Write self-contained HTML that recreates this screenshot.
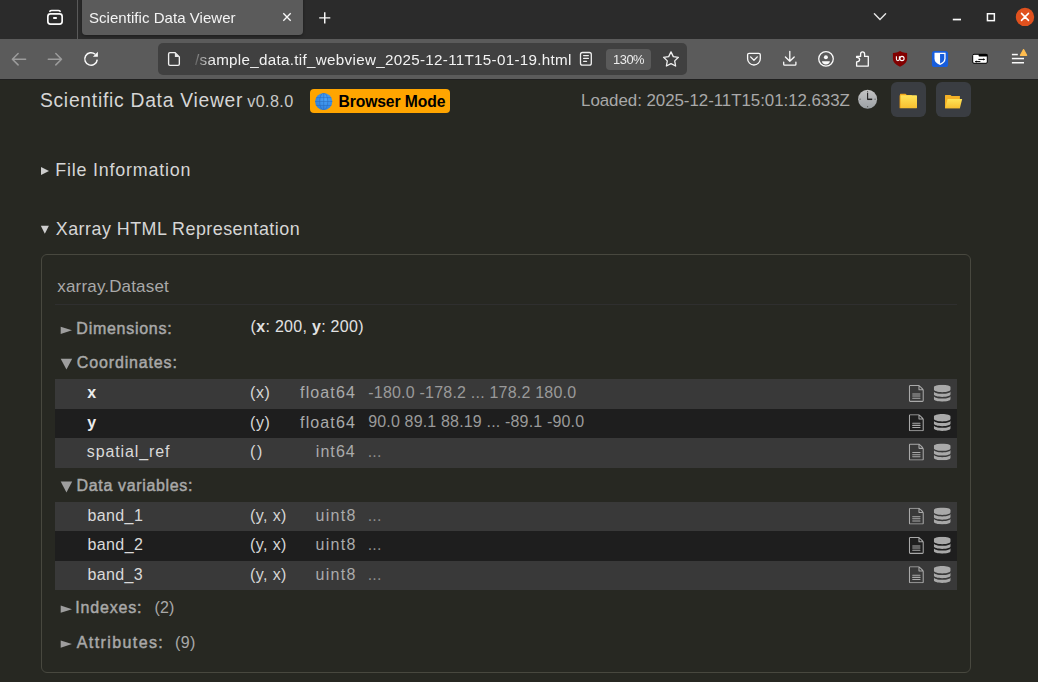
<!DOCTYPE html>
<html><head><meta charset="utf-8">
<style>
*{box-sizing:border-box;margin:0;padding:0}
html,body{width:1038px;height:682px;overflow:hidden;background:#272822;font-family:"Liberation Sans",sans-serif}
.a{position:absolute;white-space:nowrap;line-height:1}
#tabbar{position:absolute;left:0;top:0;width:1038px;height:39px;background:#2b2b2b}
#sep{position:absolute;left:77px;top:0;width:1px;height:39px;background:#5a5a5a}
#tab{position:absolute;left:82px;top:-6px;width:221px;height:41px;background:#5b5b5b;border-radius:4px;box-shadow:0 1px 3px rgba(0,0,0,0.35)}
#nav{position:absolute;left:0;top:39px;width:1038px;height:40px;background:#5b5b5b}
#urlbox{position:absolute;left:158px;top:43px;width:529px;height:32px;background:#404040;border-radius:5px}
#zoom{position:absolute;left:606px;top:49px;width:45px;height:21px;background:#5a5a5a;border-radius:4px}
.btn{position:absolute;top:82px;width:35px;height:35px;background:#3a3d42;border-radius:6px}
#badge{position:absolute;left:310px;top:89px;width:140px;height:24px;background:#ffa500;border-radius:4px}
#box{position:absolute;left:41px;top:254px;width:930px;height:419px;border:1px solid #48483f;border-radius:6px}
#hr{position:absolute;left:55px;top:304px;width:902px;height:1px;background:#2f2f2f}
.row{position:absolute;left:55px;width:902px}
.r1{background:#393939}
.r2{background:#1e1e1e}
#ico{position:absolute;left:0;top:0}
#fade{position:absolute;left:188px;top:50px;width:26px;height:20px;background:linear-gradient(to right,#404040 15%,rgba(64,64,64,0.55) 45%,rgba(64,64,64,0))}
</style></head><body>
<div id="tabbar"></div>
<div id="sep"></div>
<div id="tab"></div>
<div id="nav"></div>
<div id="urlbox"></div>
<div style="position:absolute;left:0;top:79px;width:1038px;height:1px;background:#202020"></div>
<div id="zoom"></div>
<div class="btn" style="left:891px"></div>
<div class="btn" style="left:936px"></div>
<div id="badge"></div>
<div id="box"></div>
<div id="hr"></div>
<div class="row r1" style="top:379px;height:30px"></div>
<div class="row r2" style="top:409px;height:29px"></div>
<div class="row r1" style="top:438px;height:30px"></div>
<div class="row r1" style="top:502px;height:29px"></div>
<div class="row r2" style="top:531px;height:30px"></div>
<div class="row r1" style="top:561px;height:29px"></div>
<svg id="ico" width="1038" height="682" viewBox="0 0 1038 682">
<defs>
<symbol id="dbi" viewBox="0 0 32 32"><path d="M16 0c-8.837 0-16 2.239-16 5v4c0 2.761 7.163 5 16 5s16-2.239 16-5v-4c0-2.761-7.163-5-16-5z"/><path d="M16 17c-8.837 0-16-2.239-16-5v6c0 2.761 7.163 5 16 5s16-2.239 16-5v-6c0 2.761-7.163 5-16 5z"/><path d="M16 26c-8.837 0-16-2.239-16-5v6c0 2.761 7.163 5 16 5s16-2.239 16-5v-6c0 2.761-7.163 5-16 5z"/></symbol>
<symbol id="fti" viewBox="0 0 32 32"><path d="M28.681 7.159c-0.694-0.947-1.662-2.053-2.724-3.116s-2.169-2.030-3.116-2.724c-1.612-1.182-2.393-1.319-2.841-1.319h-15.5c-1.378 0-2.5 1.121-2.5 2.5v27c0 1.378 1.122 2.5 2.5 2.5h23c1.378 0 2.5-1.122 2.5-2.5v-19.5c0-0.448-0.137-1.23-1.319-2.841zM24.543 5.457c0.959 0.959 1.712 1.825 2.268 2.543h-4.811v-4.811c0.718 0.556 1.584 1.309 2.543 2.268zM28 29.5c0 0.271-0.229 0.5-0.5 0.5h-23c-0.271 0-0.5-0.229-0.5-0.5v-27c0-0.271 0.229-0.5 0.5-0.5 0 0 15.499-0 15.5 0v7c0 0.552 0.448 1 1 1h7v19.5z"/><path d="M23 26h-14c-0.552 0-1-0.448-1-1s0.448-1 1-1h14c0.552 0 1 0.448 1 1s-0.448 1-1 1z"/><path d="M23 22h-14c-0.552 0-1-0.448-1-1s0.448-1 1-1h14c0.552 0 1 0.448 1 1s-0.448 1-1 1z"/><path d="M23 18h-14c-0.552 0-1-0.448-1-1s0.448-1 1-1h14c0.552 0 1 0.448 1 1s-0.448 1-1 1z"/></symbol>
<linearGradient id="clk" x1="0" y1="0" x2="0" y2="1"><stop offset="0" stop-color="#c4c4c4"/><stop offset="1" stop-color="#9ca1a5"/></linearGradient>
<linearGradient id="fld" x1="0" y1="0" x2="0" y2="1"><stop offset="0" stop-color="#ffe458"/><stop offset="1" stop-color="#f7bf30"/></linearGradient>
</defs>
<!-- tab bar -->
<g fill="none" stroke="#fafafa" stroke-width="1.6" stroke-linecap="round">
<rect x="47.85" y="13.8" width="14.3" height="10.4" rx="2.6" stroke-width="1.7"/>
<path d="M49.8 11.4 Q50.2 10.4 51.8 10.4 H58.2 Q59.8 10.4 60.2 11.4" stroke-width="1.5"/>
<path d="M53.2 18 H56.8" stroke-width="2" stroke-linecap="butt"/>
<path d="M283.3 13.3 L290.7 20.7 M290.7 13.3 L283.3 20.7" stroke-width="1.35" stroke-linecap="butt"/>
<path d="M319.2 17.85 H330.3 M324.75 12.3 V23.4" stroke-width="1.45" stroke-linecap="butt"/>
<path d="M874.4 13.7 L880 19.4 L885.6 13.7" stroke="#e6e6e6" stroke-width="1.4"/>
<rect x="987.45" y="13.75" width="6.9" height="6.9" stroke-width="1.5"/>
</g>
<rect x="952.8" y="18.7" width="8.2" height="1.7" fill="#fafafa"/>
<circle cx="1025" cy="16.9" r="9.2" fill="#e0511e"/>
<path d="M1021.5 13.4 L1028.5 20.4 M1028.5 13.4 L1021.5 20.4" stroke="#fff" stroke-width="1.5" stroke-linecap="round"/>
<!-- nav bar -->
<g fill="none" stroke="#9c9c9c" stroke-width="1.5" stroke-linecap="round" stroke-linejoin="round">
<path d="M25.6 59.2 H12.4 M18.1 53.5 L12.4 59.2 L18.1 64.9"/>
<path d="M48.3 59.2 H61.5 M55.8 53.5 L61.5 59.2 L55.8 64.9"/>
</g>
<path d="M97.25 59.6 A6.25 6.25 0 1 1 95.2 54.3" fill="none" stroke="#fafafa" stroke-width="1.5"/>
<path d="M97.9 51.8 V56.8 H92.9 Z" fill="#fafafa"/>
<path d="M170 52.55 H174.9 L179.35 57 V63.9 Q179.35 65.3 177.95 65.3 H170 Q168.6 65.3 168.6 63.9 V53.95 Q168.6 52.55 170 52.55 Z" fill="none" stroke="#f0f0f0" stroke-width="1.35" stroke-linejoin="round"/>
<path d="M174.9 52.6 L179.3 57.1 H174.9 Z" fill="#e8e8e8"/>
<g fill="none" stroke="#f0f0f0" stroke-width="1.3" stroke-linecap="round" stroke-linejoin="round">
<rect x="580.5" y="52.5" width="10.8" height="12.7" rx="2"/>
<path d="M583.6 55.6 H588.4 M583.6 58.4 H588.4 M583.6 61.3 H586.6" stroke-width="1.2"/>
<path d="M671 51.9 L673.3 56.6 L678.4 57.3 L674.7 60.9 L675.6 66 L671 63.6 L666.4 66 L667.3 60.9 L663.6 57.3 L668.7 56.6 Z"/>
</g>
<g fill="none" stroke="#fafafa" stroke-width="1.3" stroke-linecap="round" stroke-linejoin="round">
<path d="M749.1 53.3 H758.8 Q760.3 53.3 760.3 54.8 V58.65 A6.35 6.35 0 0 1 747.6 58.65 V54.8 Q747.6 53.3 749.1 53.3 Z"/>
<path d="M750.6 56.9 L753.95 60.2 L757.3 56.9"/>
<path d="M789.8 51.3 V61.3 M785.4 57 L789.8 61.3 L794.2 57"/>
<path d="M783.7 62.2 V64.3 Q783.7 65.2 784.6 65.2 H795 Q795.9 65.2 795.9 64.3 V62.2"/>
<circle cx="826" cy="58.85" r="7.3"/>
<path d="M856.6 66.1 V61.8 Q859.6 61.8 859.6 59.6 Q859.6 57.4 856.6 57.4 V56.4 H860.6 V54.1 Q860.6 51.9 862.6 51.9 Q864.6 51.9 864.6 54.1 V56.4 H868.3 V66.1 Z"/>
</g>
<circle cx="825.9" cy="57.3" r="2" fill="#fafafa"/>
<path d="M821.9 61.3 H829.9 Q829.6 64.4 825.9 64.4 Q822.2 64.4 821.9 61.3 Z" fill="#fafafa"/>
<path d="M900 50.9 L902.5 52.3 Q904.8 53 907.1 53 V59 Q907.1 63.6 900 66.7 Q892.9 63.6 892.9 59 V53 Q895.2 53 897.5 52.3 Z" fill="#820000"/>
<path d="M896.4 56.3 V59.1 Q896.4 60.7 897.9 60.7 Q899.4 60.7 899.4 59.1 V56.3" fill="none" stroke="#fff" stroke-width="1.1"/>
<circle cx="902" cy="58.5" r="2.1" fill="none" stroke="#fff" stroke-width="1.1"/>
<rect x="931.9" y="50.9" width="16.2" height="16.1" rx="2.6" fill="#175ddc"/>
<path d="M934.5 52.8 H945.6 V58.5 Q945.6 62.8 940.05 65.1 Q934.5 62.8 934.5 58.5 Z" fill="#fff"/>
<path d="M940.05 54.1 H944.3 V58.5 Q944.3 61.8 940.05 63.6 Z" fill="#175ddc"/>
<rect x="972.7" y="54.3" width="14.6" height="9" rx="1.3" fill="#fff" stroke="#000" stroke-width="1"/>
<rect x="978.6" y="54" width="9" height="2.6" rx="0.8" fill="#000"/>
<path d="M978.4 59.4 H984.7 M975.2 61.6 H980.4" stroke="#000" stroke-width="1"/>
<path d="M983.2 58.3 L984.9 59.4 L983.2 60.5 Z M976.7 60.5 L975 61.6 L976.7 62.7 Z" fill="#000"/>
<rect x="1011.9" y="53.8" width="5.9" height="1.5" fill="#fafafa"/>
<rect x="1011.9" y="57.8" width="12.1" height="1.5" fill="#fafafa"/>
<rect x="1011.9" y="62" width="12.1" height="1.5" fill="#fafafa"/>
<path d="M1023.55 49.6 L1026.7 55.3 H1020.4 Z" fill="#ffbd4f" stroke="#ffbd4f" stroke-width="1.2" stroke-linejoin="round"/>
<!-- page header -->
<clipPath id="gclip"><circle cx="323.7" cy="101.5" r="8.6"/></clipPath>
<radialGradient id="glg" cx="0.6" cy="0.35" r="0.7"><stop offset="0" stop-color="#4aa3f5"/><stop offset="1" stop-color="#2f7fdc"/></radialGradient>
<circle cx="323.7" cy="101.5" r="8.6" fill="url(#glg)"/>
<g fill="none" stroke="#2a6bbf" stroke-width="0.7" stroke-opacity="0.8" clip-path="url(#gclip)">
<ellipse cx="323.7" cy="101.5" rx="4.1" ry="8.6"/>
<path d="M323.7 92 V111 M314 97.6 H333 M314 101.5 H333 M314 105.5 H333"/>
</g>
<circle cx="867.6" cy="99.2" r="9.5" fill="url(#clk)"/>
<path d="M867.6 99.4 V92.8" stroke="#222" stroke-width="1.1"/>
<path d="M867.3 99.3 H872.2" stroke="#222" stroke-width="1.5"/>
<g fill="#555"><circle cx="867.6" cy="91.6" r="0.6"/><circle cx="867.6" cy="106.7" r="0.6"/><circle cx="860.1" cy="99.2" r="0.6"/><circle cx="875.1" cy="99.2" r="0.6"/></g>
<path d="M900 94.2 Q900 93.7 900.5 93.7 H905.5 L906.8 95 H911.8 V96 H900 Z" fill="#f2a81c"/>
<rect x="900" y="95.3" width="17" height="12.9" rx="0.4" fill="url(#fld)"/>
<path d="M900 95.3 V108.2" stroke="#e59a14" stroke-width="0.9"/>
<path d="M945 95.4 Q945 94.9 945.5 94.9 H950.5 L951.6 96 H959.9 V108.2 H945 Z" fill="#f3b126"/>
<path d="M947.6 98.9 H962.2 L959.9 108.2 H945.1 Z" fill="url(#fld)"/>
<!-- details triangles -->
<path d="M41 167 L49 171 L41 175 Z" fill="#cdcdcd"/>
<path d="M40.8 225.8 H48.9 L44.85 233.8 Z" fill="#cdcdcd"/>
<g fill="#9e9e9e">
<path d="M60.7 326.7 L72 330.3 L60.7 333.9 Z"/>
<path d="M60.7 358.7 H72.2 L66.45 369.5 Z"/>
<path d="M60.7 481.6 H72.2 L66.45 492.4 Z"/>
<path d="M60.7 605.6 L72 609.2 L60.7 612.8 Z"/>
<path d="M60.7 640.5 L72 644.1 L60.7 647.7 Z"/>
</g>
<g fill="#a9a9a9">
<use href="#fti" x="907.9" y="385" width="16.9" height="16.9"/>
<use href="#dbi" x="933.8" y="384.8" width="16.9" height="16.9"/>
<use href="#fti" x="907.9" y="414.3" width="16.9" height="16.9"/>
<use href="#dbi" x="933.8" y="414.1" width="16.9" height="16.9"/>
<use href="#fti" x="907.9" y="443.6" width="16.9" height="16.9"/>
<use href="#dbi" x="933.8" y="443.4" width="16.9" height="16.9"/>
<use href="#fti" x="907.9" y="507.7" width="16.9" height="16.9"/>
<use href="#dbi" x="933.8" y="507.5" width="16.9" height="16.9"/>
<use href="#fti" x="907.9" y="537" width="16.9" height="16.9"/>
<use href="#dbi" x="933.8" y="536.8" width="16.9" height="16.9"/>
<use href="#fti" x="907.9" y="566.3" width="16.9" height="16.9"/>
<use href="#dbi" x="933.8" y="566.1" width="16.9" height="16.9"/>
</g>
</svg>
<div class="a" id="tabt" style="left:89.19px;top:10.30px;font-size:15px;font-weight:400;color:#f4f4f4;letter-spacing:0.045px;will-change:transform;">Scientific Data Viewer</div>
<div class="a" id="urlt" style="left:195.18px;top:51.83px;font-size:15.2px;font-weight:400;color:#f2f2f2;letter-spacing:0.303px;will-change:transform;">/sample_data.tif_webview_2025-12-11T15-01-19.html</div>
<div class="a" id="zoomt" style="left:613.19px;top:54.38px;font-size:12.9px;font-weight:400;color:#ececec;letter-spacing:-0.480px;will-change:transform;">130%</div>
<div class="a" id="title" style="left:39.91px;top:90.86px;font-size:19.3px;font-weight:400;color:#d6d6d6;letter-spacing:0.733px;">Scientific Data Viewer</div>
<div class="a" id="ver" style="left:247.34px;top:92.59px;font-size:16.2px;font-weight:400;color:#c8c8c8;letter-spacing:0.344px;">v0.8.0</div>
<div class="a" id="badget" style="left:338.42px;top:94.01px;font-size:15.7px;font-weight:700;color:#000000;letter-spacing:-0.095px;">Browser Mode</div>
<div class="a" id="loaded" style="left:581.04px;top:93.49px;font-size:16.9px;font-weight:400;color:#a9a9a9;letter-spacing:-0.042px;">Loaded: 2025-12-11T15:01:12.633Z</div>
<div class="a" id="finfo" style="left:55.19px;top:161.65px;font-size:17.9px;font-weight:400;color:#d6d6d6;letter-spacing:0.803px;">File Information</div>
<div class="a" id="xrepr" style="left:55.80px;top:220.65px;font-size:17.9px;font-weight:400;color:#d6d6d6;letter-spacing:0.471px;">Xarray HTML Representation</div>
<div class="a" id="ds" style="left:57.35px;top:278.31px;font-size:17.0px;font-weight:400;color:#a9a9a9;letter-spacing:0.162px;">xarray.Dataset</div>
<div class="a" id="dimsl" style="left:76.35px;top:320.56px;font-size:16px;font-weight:400;color:#a9a9a9;letter-spacing:0.727px;-webkit-text-stroke:0.45px currentColor;">Dimensions:</div>
<div class="a" id="dimsv" style="left:250.59px;top:319.36px;font-size:16px;font-weight:400;color:#e2e2e2;letter-spacing:0.292px;">(<b>x</b>: 200, <b>y</b>: 200)</div>
<div class="a" id="coordl" style="left:76.86px;top:355.26px;font-size:16px;font-weight:400;color:#a9a9a9;letter-spacing:0.847px;-webkit-text-stroke:0.45px currentColor;">Coordinates:</div>
<div class="a" id="r1n" style="left:87.32px;top:385.36px;font-size:16px;font-weight:700;color:#ececec;letter-spacing:4.353px;">x</div>
<div class="a" id="r1d" style="left:250.06px;top:385.36px;font-size:16px;font-weight:400;color:#d6d6d6;letter-spacing:0.622px;">(x)</div>
<div class="a" id="r1t" style="left:300.08px;top:385.36px;font-size:16px;font-weight:400;color:#ababab;letter-spacing:1.112px;">float64</div>
<div class="a" id="r1v" style="left:368.25px;top:385.26px;font-size:16px;font-weight:400;color:#9a9a9a;letter-spacing:0.212px;">-180.0 -178.2 ... 178.2 180.0</div>
<div class="a" id="r2n" style="left:87.32px;top:414.56px;font-size:16px;font-weight:700;color:#ececec;letter-spacing:2.392px;">y</div>
<div class="a" id="r2d" style="left:250.06px;top:414.56px;font-size:16px;font-weight:400;color:#d6d6d6;letter-spacing:0.622px;">(y)</div>
<div class="a" id="r2t" style="left:300.08px;top:414.56px;font-size:16px;font-weight:400;color:#ababab;letter-spacing:1.112px;">float64</div>
<div class="a" id="r2v" style="left:368.15px;top:414.16px;font-size:16px;font-weight:400;color:#9a9a9a;letter-spacing:0.171px;">90.0 89.1 88.19 ... -89.1 -90.0</div>
<div class="a" id="r3n" style="left:86.87px;top:444.26px;font-size:16px;font-weight:400;color:#dadada;letter-spacing:0.879px;">spatial_ref</div>
<div class="a" id="r3d" style="left:250.06px;top:444.26px;font-size:16px;font-weight:400;color:#d6d6d6;letter-spacing:1.671px;">()</div>
<div class="a" id="r3t" style="left:315.76px;top:444.26px;font-size:16px;font-weight:400;color:#ababab;letter-spacing:1.080px;">int64</div>
<div class="a" id="r3v" style="left:367.75px;top:444.26px;font-size:16px;font-weight:400;color:#8c8c8c;letter-spacing:0.167px;">...</div>
<div class="a" id="dvl" style="left:76.52px;top:478.16px;font-size:16px;font-weight:400;color:#a9a9a9;letter-spacing:0.659px;-webkit-text-stroke:0.45px currentColor;">Data variables:</div>
<div class="a" id="r4n" style="left:87.42px;top:508.16px;font-size:16px;font-weight:400;color:#dadada;letter-spacing:0.400px;">band_1</div>
<div class="a" id="r4d" style="left:250.06px;top:508.16px;font-size:16px;font-weight:400;color:#d6d6d6;letter-spacing:0.405px;">(y, x)</div>
<div class="a" id="r4t" style="left:315.57px;top:508.16px;font-size:16px;font-weight:400;color:#ababab;letter-spacing:1.275px;">uint8</div>
<div class="a" id="r4v" style="left:367.75px;top:508.16px;font-size:16px;font-weight:400;color:#8c8c8c;letter-spacing:0.167px;">...</div>
<div class="a" id="r5n" style="left:87.42px;top:537.46px;font-size:16px;font-weight:400;color:#dadada;letter-spacing:0.424px;">band_2</div>
<div class="a" id="r5d" style="left:250.06px;top:537.46px;font-size:16px;font-weight:400;color:#d6d6d6;letter-spacing:0.405px;">(y, x)</div>
<div class="a" id="r5t" style="left:315.57px;top:537.46px;font-size:16px;font-weight:400;color:#ababab;letter-spacing:1.275px;">uint8</div>
<div class="a" id="r5v" style="left:367.75px;top:537.46px;font-size:16px;font-weight:400;color:#8c8c8c;letter-spacing:0.167px;">...</div>
<div class="a" id="r6n" style="left:87.42px;top:566.76px;font-size:16px;font-weight:400;color:#dadada;letter-spacing:0.393px;">band_3</div>
<div class="a" id="r6d" style="left:250.06px;top:566.76px;font-size:16px;font-weight:400;color:#d6d6d6;letter-spacing:0.405px;">(y, x)</div>
<div class="a" id="r6t" style="left:315.57px;top:566.76px;font-size:16px;font-weight:400;color:#ababab;letter-spacing:1.275px;">uint8</div>
<div class="a" id="r6v" style="left:367.75px;top:566.76px;font-size:16px;font-weight:400;color:#8c8c8c;letter-spacing:0.167px;">...</div>
<div class="a" id="idxl" style="left:75.34px;top:600.26px;font-size:16px;font-weight:400;color:#a9a9a9;letter-spacing:0.821px;-webkit-text-stroke:0.45px currentColor;">Indexes:</div>
<div class="a" id="idxv" style="left:154.41px;top:600.26px;font-size:16px;font-weight:400;color:#a9a9a9;letter-spacing:0.204px;">(2)</div>
<div class="a" id="attl" style="left:76.78px;top:634.96px;font-size:16px;font-weight:400;color:#a9a9a9;letter-spacing:1.400px;-webkit-text-stroke:0.45px currentColor;">Attributes:</div>
<div class="a" id="attv" style="left:174.94px;top:634.96px;font-size:16px;font-weight:400;color:#a9a9a9;letter-spacing:0.363px;">(9)</div>
<div id="fade"></div>
</body></html>
